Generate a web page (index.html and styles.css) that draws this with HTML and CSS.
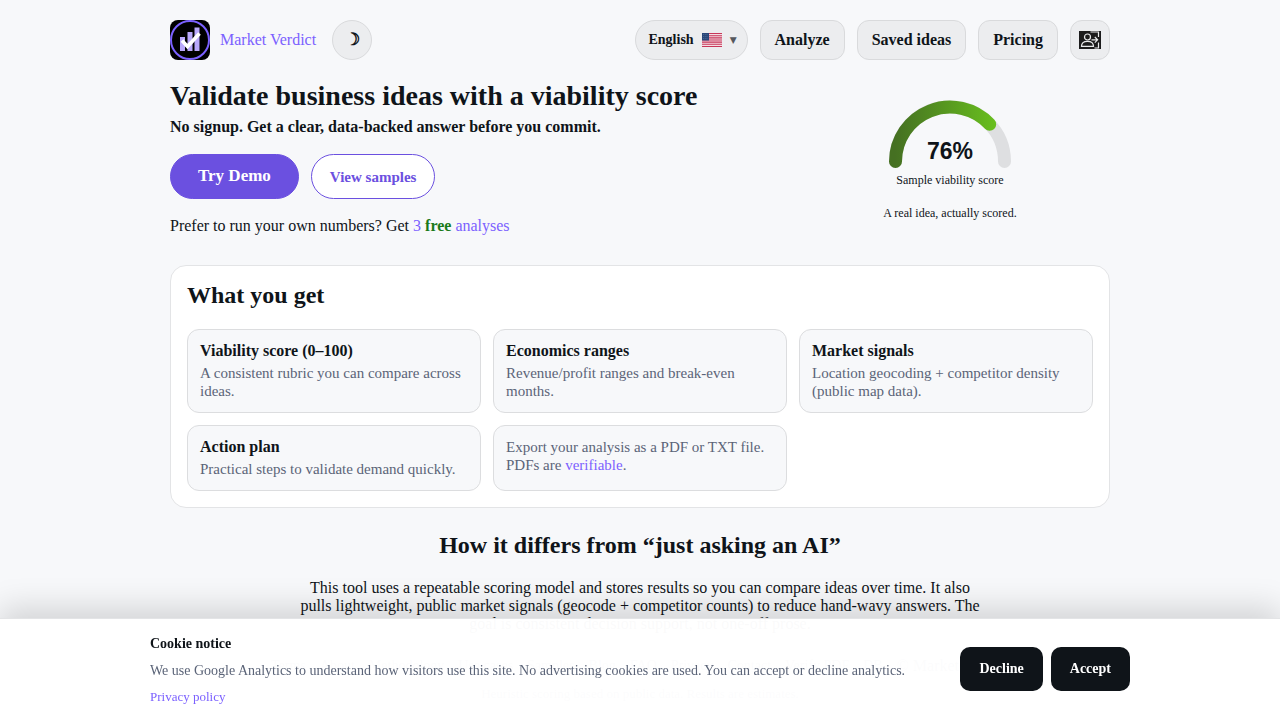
FILE: index.html
```html
<!DOCTYPE html>
<html lang="en">
<head>
    <meta charset="UTF-8">
    <meta name="viewport" content="width=device-width, initial-scale=1.0">
    <title>Market Verdict</title>
    <link rel="stylesheet" href="styles.css">
</head>
<body>

    <div class="container">
        <header class="header">
            <a class="brand" href="#">
                <svg class="logo" viewBox="0 0 40 40" aria-hidden="true">
                    <rect width="40" height="40" rx="8" fill="#000"/>
                    <circle cx="20" cy="20" r="19" fill="none" stroke="#7b61ff" stroke-width="2"/>
                    <path d="M10 17h5v14h-5zM17.500 12h5v19h-5zM24.500 7.500h5V31h-5z" fill="#b9a8fb"/>
                    <path d="M12 20.500l5.500 6L29.500 13.500" fill="none" stroke="#fff" stroke-width="3.600"/>
                </svg>
                <span>Market Verdict</span>
            </a>
            <button class="theme-toggle" type="button" aria-label="Toggle theme">☽</button>

            <nav class="nav">
                <button class="nav-button language" type="button">
                    <span>English</span>
                    <svg class="flag" viewBox="0 0 20 14" aria-hidden="true">
                        <rect width="20" height="14" rx="1" fill="#f3dde3"/>
                        <path d="M0 .5h20M0 2.700h20M0 4.900h20M0 7h20M0 9.100h20M0 11.300h20M0 13.500h20" stroke="#c8375a" stroke-width="1.100"/>
                        <rect width="7" height="7.500" fill="#29477a"/>
                        <path d="M1 1.500h5M1 3.500h5M1 5.500h5" stroke="#6f86ab" stroke-width=".6" stroke-dasharray=".8 1"/>
                    </svg>
                    <span class="caret">▼</span>
                </button>
                <a class="nav-button" href="#">Analyze</a>
                <a class="nav-button" href="#">Saved ideas</a>
                <a class="nav-button" href="#">Pricing</a>
                <a class="nav-button login" href="#" aria-label="Log in">
                    <svg class="login-icon" viewBox="0 0 22 18" aria-hidden="true">
                        <rect width="22" height="18" fill="#1c1c1c"/>
                        <g fill="none" stroke="#e9eaeb">
                            <circle cx="8.500" cy="6" r="3" stroke-width="1.200"/>
                            <path d="M2.500 15.300c0-3.500 2.500-5 6-5s6 1.500 6 5z" stroke-width="1.200"/>
                            <path d="M11.500 1h8v5M19.500 11.500v5.500h-4" stroke-width="1.200"/>
                            <path d="M12.500 8.800h6M15.800 6l2.800 2.800-2.800 2.800" stroke-width="1.200"/>
                        </g>
                    </svg>
                </a>
            </nav>
        </header>

        <section class="hero">
            <div class="hero-text">
                <h1>Validate business ideas with a viability score</h1>
                <p class="tagline">No signup. Get a clear, data-backed answer before you commit.</p>
                <div class="buttons">
                    <a class="button button-primary" href="#">Try Demo</a>
                    <a class="button button-outline" href="#">View samples</a>
                </div>
                <p class="prefer">Prefer to run your own numbers? Get <a href="#">3 <strong>free</strong> analyses</a></p>
            </div>
            <div class="score">
                <svg class="gauge" viewBox="0 0 140 80" role="img" aria-label="76%">
                    <defs>
                        <linearGradient id="gaugeFill" gradientUnits="userSpaceOnUse" x1="15" y1="0" x2="115" y2="0">
                            <stop offset="0" stop-color="#457022"/>
                            <stop offset="1" stop-color="#68be1e"/>
                        </linearGradient>
                    </defs>
                    <g fill="none" stroke-width="13" stroke-linecap="round">
                        <path d="M15.500 71.500a54.500 54.500 0 0 1 109 0" stroke="#dedfe1"/>
                        <path d="M15.500 71.500a54.500 54.500 0 0 1 94.200-37.200" stroke="url(#gaugeFill)"/>
                    </g>
                    <text class="gauge-value" x="70" y="69" text-anchor="middle">76%</text>
                </svg>
                <p>Sample viability score</p>
                <p class="score-note">A real idea, actually scored.</p>
            </div>
        </section>

        <section class="panel">
            <h2>What you get</h2>
            <div class="features">
                <div class="feature">
                    <h3>Viability score (0–100)</h3>
                    <p>A consistent rubric you can compare across ideas.</p>
                </div>
                <div class="feature">
                    <h3>Economics ranges</h3>
                    <p>Revenue/profit ranges and break-even months.</p>
                </div>
                <div class="feature">
                    <h3>Market signals</h3>
                    <p>Location geocoding + competitor density (public map data).</p>
                </div>
                <div class="feature">
                    <h3>Action plan</h3>
                    <p>Practical steps to validate demand quickly.</p>
                </div>
                <div class="feature">
                    <p>Export your analysis as a PDF or TXT file. PDFs are <a href="#">verifiable</a>.</p>
                </div>
            </div>
        </section>

        <section class="differs">
            <h2>How it differs from “just asking an AI”</h2>
            <p>This tool uses a repeatable scoring model and stores results so you can compare ideas over time. It also pulls lightweight, public market signals (geocode + competitor counts) to reduce hand-wavy answers. The goal is consistent decision support, not one-off prose.</p>
        </section>

        <footer class="footer">
            <div class="footer-links">
                <a href="#">Terms</a>
                <a href="#">About</a>
                <a href="#">Methodology</a>
                <a href="#">Use cases</a>
                <a href="#">Samples</a>
                <a href="#">Blog</a>
                <a href="#">FAQ</a>
                <a href="#">Privacy</a>
                <a href="#">Contact</a>
                <a href="#">Verify PDF</a>
                <a href="#">DB</a>
                <span>© Market Verdict</span>
            </div>
            <p>Heuristic scoring based on public data. Results are estimates.</p>
        </footer>
    </div>

    <div class="cookie-banner">
        <div class="cookie-content">
            <div class="cookie-text">
                <strong>Cookie notice</strong>
                <p>We use Google Analytics to understand how visitors use this site. No advertising cookies are used. You can accept or decline analytics.</p>
                <a href="#">Privacy policy</a>
            </div>
            <div class="cookie-buttons">
                <button type="button">Decline</button>
                <button type="button">Accept</button>
            </div>
        </div>
    </div>

</body>
</html>
```
FILE: styles.css
```css
* {
    box-sizing: border-box;
}
body {
    font-family: "Liberation Serif", "Times New Roman", serif;
    font-size: 16px;
    line-height: 18px;
    background-color: #f7f8fa;
    color: #0f1419;
    margin: 0;
}
h1, h2, h3, p {
    margin: 0;
}
a {
    color: #7b61ff;
    text-decoration: none;
}
.container {
    max-width: 980px;
    margin: 0 auto;
    padding: 20px;
}
.header {
    display: flex;
    align-items: center;
    gap: 16px;
}
.brand {
    display: flex;
    align-items: center;
    gap: 10px;
}
.logo {
    width: 40px;
    height: 40px;
}
.theme-toggle {
    width: 40px;
    height: 40px;
    padding: 0 0 2px;
    border: 1px solid #d9dadc;
    border-radius: 50%;
    background-color: #ecedef;
    color: #0f1419;
    font-family: inherit;
    font-size: 17px;
    font-weight: bold;
}
.nav {
    display: flex;
    gap: 12px;
    margin-left: auto;
}
.nav-button {
    display: flex;
    align-items: center;
    height: 40px;
    padding: 0 14px;
    border: 1px solid #d9dadc;
    border-radius: 12px;
    background-color: #ecedef;
    color: #0f1419;
    font-family: inherit;
    font-size: 16px;
    font-weight: bold;
}
.language {
    gap: 8px;
    padding: 0 10px 0 12px;
    border-radius: 20px;
    font-size: 14px;
}
.flag {
    width: 20px;
    height: 14px;
}
.caret {
    font-family: "DejaVu Sans", sans-serif;
    font-size: 9px;
    font-weight: normal;
    color: #55585d;
}
.login {
    width: 40px;
    padding: 0;
    justify-content: center;
}
.login-icon {
    width: 22px;
    height: 18px;
}
.hero {
    display: grid;
    grid-template-columns: 1fr 320px;
    margin-top: 20px;
}
.hero h1 {
    font-size: 28px;
    line-height: 32px;
}
.tagline {
    margin-top: 6px;
    font-weight: bold;
}
.buttons {
    display: flex;
    gap: 12px;
    margin: 18px 0;
}
.button {
    display: flex;
    align-items: center;
    height: 45px;
    border: 1px solid #6b50e0;
    border-radius: 23px;
    font-weight: bold;
}
.button-primary {
    padding: 0 27px 2px;
    background-color: #6b50e0;
    color: #fff;
    font-size: 17px;
}
.button-outline {
    padding: 0 18px;
    background-color: #fff;
    color: #6b50e0;
    font-size: 15px;
}
.prefer strong {
    color: #1a7a1a;
}
.score {
    padding-top: 10px;
    text-align: center;
    font-size: 12px;
}
.gauge {
    display: block;
    width: 140px;
    height: 80px;
    margin: 0 auto 1px;
}
.gauge-value {
    fill: #0f1419;
    font-family: "Liberation Sans", Arial, sans-serif;
    font-size: 23px;
    font-weight: bold;
}
.score-note {
    margin-top: 15px;
}
.panel {
    margin-top: 30px;
    padding: 16px;
    border: 1px solid #e3e4e6;
    border-radius: 16px;
    background-color: #fff;
}
h2 {
    font-size: 24px;
    line-height: 27px;
}
.features {
    display: grid;
    grid-template-columns: repeat(3, 1fr);
    gap: 12px;
    margin-top: 20px;
}
.feature {
    padding: 12px;
    border: 1px solid #dcdddf;
    border-radius: 12px;
    background-color: #f7f8fa;
    color: #5b6478;
    font-size: 15px;
}
.feature h3 {
    margin-bottom: 4px;
    color: #0f1419;
    font-size: 16px;
}
.differs {
    max-width: 680px;
    margin: 24px auto 0;
    text-align: center;
}
.differs p {
    margin-top: 20px;
}
.footer {
    margin-top: 24px;
    text-align: center;
    color: #5b6478;
    font-size: 13px;
}
.footer-links {
    display: flex;
    flex-wrap: wrap;
    justify-content: center;
    gap: 14px;
    margin-bottom: 10px;
    font-size: 14px;
}
.footer-links span {
    font-size: 16px;
}
.footer a {
    color: #5b6478;
}
.cookie-banner {
    position: fixed;
    left: 0;
    right: 0;
    bottom: 0;
    padding: 16px 16px 14px;
    border-top: 1px solid #e3e4e6;
    background-color: rgba(255, 255, 255, 0.98);
    box-shadow: 0 -10px 30px rgba(0, 0, 0, 0.15);
}
.cookie-content {
    display: flex;
    align-items: center;
    justify-content: space-between;
    gap: 16px;
    max-width: 980px;
    margin: 0 auto;
}
.cookie-text {
    color: #5b6478;
    font-size: 14px;
}
.cookie-text strong {
    color: #0f1419;
}
.cookie-text p {
    margin: 9px 0 8px;
}
.cookie-text a {
    font-size: 13px;
}
.cookie-buttons {
    display: flex;
    gap: 8px;
    padding-bottom: 4px;
}
.cookie-buttons button {
    height: 44px;
    padding: 0 19px;
    border: none;
    border-radius: 10px;
    background-color: #0f1419;
    color: #fff;
    font-family: inherit;
    font-size: 14px;
    font-weight: bold;
}
```
